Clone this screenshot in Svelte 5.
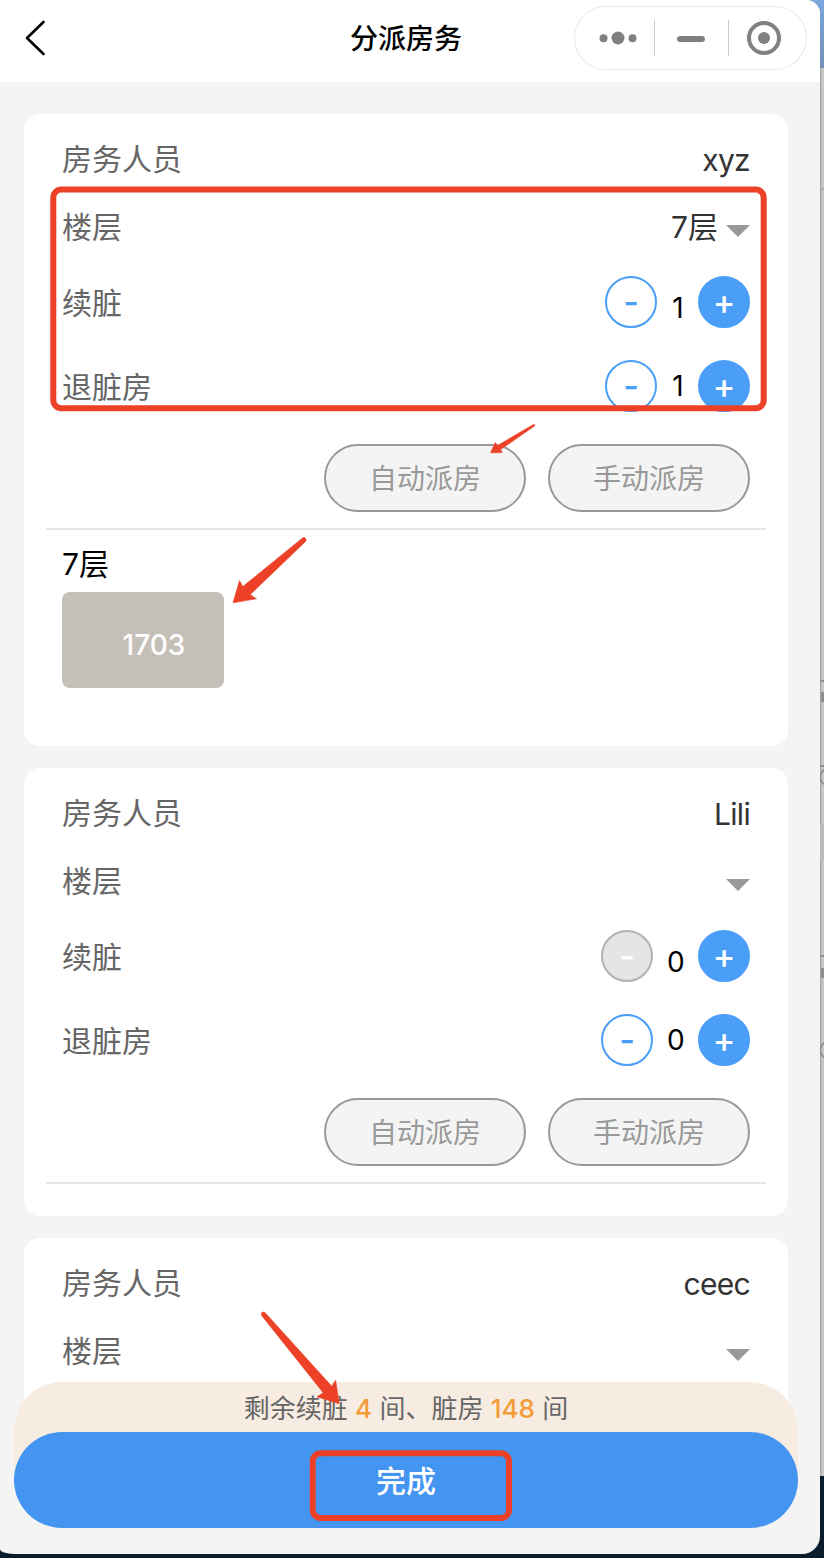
<script>
	let staff = [
		{
			id: 1,
			name: 'xyz',
			floor: '7层',
			stay: 1,
			checkout: 1,
			stayDisabled: false,
			open: true,
			rooms: [{floor: '7层', list: ['1703']}]
		},
		{id: 2, name: 'Lili', floor: '', stay: 0, checkout: 0, stayDisabled: true, open: true, rooms: []},
		{id: 3, name: 'ceec', floor: '', stay: 0, checkout: 0, stayDisabled: true, open: false, rooms: []}
	];

	let stayLeft = 4;
	let dirtyLeft = 148;

	function change(item, key, step) {
		item[key] = Math.max(0, item[key] + step);
		staff = staff;
	}
</script>

<div class="desktop">
	<div class="behind">
		<div class="behind_sky"></div>
		<div class="behind_window">
			<i class="line l1"></i>
			<i class="line l2"></i>
			<i class="line l3"></i>
			<i class="line l4"></i>
			<i class="ring r1"></i>
			<i class="band"></i>
			<i class="line l5"></i>
			<i class="line l6"></i>
			<i class="ring r2"></i>
		</div>
	</div>

	<div class="phone">
		<header>
			<button class="back" aria-label="返回">
				<svg width="24" height="40" viewBox="0 0 24 40">
					<path d="M19.5 4 L3 20 L19.5 36" fill="none" stroke="#000" stroke-width="2.6" stroke-linecap="round" stroke-linejoin="round" />
				</svg>
			</button>
			<h1>分派房务</h1>
			<div class="capsule">
				<svg width="233" height="64" viewBox="0 0 233 64">
					<g fill="#808080">
						<circle cx="29.5" cy="32.3" r="4" />
						<circle cx="44" cy="32" r="6.5" />
						<circle cx="58.5" cy="32.3" r="4" />
						<rect x="103" y="30" width="28" height="6" rx="3" />
						<circle cx="190" cy="32" r="6" />
					</g>
					<circle cx="190" cy="32" r="15" fill="none" stroke="#808080" stroke-width="4" />
					<path d="M80.5 14 V50 M154.5 14 V50" stroke="#ccc" />
				</svg>
			</div>
		</header>

		<main>
			{#each staff as item (item.id)}
				<section class="card">
					<div class="row">
						<span class="label">房务人员</span>
						<span class="value name">{item.name}</span>
					</div>
					<div class="row">
						<span class="label">楼层</span>
						<span class="value picker"><span class="floor">{item.floor}</span><i class="arrow"></i></span>
					</div>
					{#if item.open}
						<div class="row tall">
							<span class="label">续脏</span>
							<div class="stepper">
								<button class="minus" class:disabled={item.stayDisabled} on:click={() => change(item, 'stay', -1)}>-</button>
								<span class="num low">{item.stay}</span>
								<button class="plus" on:click={() => change(item, 'stay', 1)}>+</button>
							</div>
						</div>
						<div class="row tall">
							<span class="label">退脏房</span>
							<div class="stepper">
								<button class="minus" on:click={() => change(item, 'checkout', -1)}>-</button>
								<span class="num">{item.checkout}</span>
								<button class="plus" on:click={() => change(item, 'checkout', 1)}>+</button>
							</div>
						</div>
						<div class="actions">
							<button>自动派房</button>
							<button>手动派房</button>
						</div>
					{/if}
					{#each item.rooms as group}
						<div class="rooms">
							<h3>{group.floor}</h3>
							<div class="rooms_list">
								{#each group.list as room}
									<div class="room">{room}</div>
								{/each}
							</div>
						</div>
					{/each}
				</section>
			{/each}
		</main>

		<footer>
			<p>剩余续脏 <b>{stayLeft}</b> 间、脏房 <b>{dirtyLeft}</b> 间</p>
			<button>完成</button>
		</footer>
	</div>

	<!-- markup over the page: frames and arrows -->
	<svg class="marks" width="824" height="1558" viewBox="0 0 824 1558">
		<g fill="none" stroke="#ec4126" stroke-width="6">
			<rect x="53.3" y="189.6" width="710.4" height="218.6" rx="8" />
			<rect x="312.7" y="1453.3" width="196.3" height="64.7" rx="8" />
		</g>
		<g fill="#ec4126" stroke="#ec4126" stroke-width="0.6" stroke-linejoin="round">
			<path d="M490.5 452.8 L495.3 442.4 L497.5 445.5 L533.4 424.5 Q535.2 424.4 534.8 425.8 L500.6 449.6 L502.2 452.6 Z" />
			<path d="M233 602.8 L239.5 580.6 L242.8 586.6 L302.8 537.8 Q305.5 537 306.2 539.6 Q306.2 541 305 542 L250.2 594.6 L256.4 598.8 Z" />
			<path d="M339.2 1403.8 L335.6 1380.2 L331.8 1386.3 L265.4 1313 Q263.5 1311 261.6 1312.8 Q260.8 1314.2 262 1316 L323.2 1392.8 L317 1396.8 Z" />
		</g>
	</svg>
</div>

<style>
	:global(body) {
		margin: 0;
		background: #0b1c2c;
	}

	.desktop {
		position: relative;
		width: 824px;
		height: 1558px;
		overflow: hidden;
		background: #0b1c2c;
		font-family: Inter, "Noto Sans CJK SC", sans-serif;
	}

	button {
		margin: 0;
		padding: 0;
		border: none;
		background: none;
		font-family: inherit;
		box-sizing: border-box;
		cursor: pointer;
	}

	.behind {
		position: absolute;
		top: 0;
		right: 0;
		width: 24px;
	}

	.behind_sky {
		height: 68px;
		background: linear-gradient(#78a7dc, #7390b5);
	}

	.behind_window {
		position: relative;
		height: 1408px;
		overflow: hidden;
		background: linear-gradient(90deg, #999 20px, #b4b4b4 21px, #c6c6c6 22px, #cacaca);
	}

	.line,
	.band {
		position: absolute;
		right: 0;
		width: 4px;
		height: 2px;
		background: #8e8e8e;
	}

	.l1 { top: 120px; background: #aaa; }
	.l2 { top: 612px; }
	.l3 { top: 624px; width: 3px; height: 10px; }
	.l4 { top: 697px; }
	.l5 { top: 887px; }
	.l6 { top: 900px; width: 3px; height: 10px; }

	.band {
		top: 756px;
		height: 36px;
		background: #bbb;
	}

	.ring {
		position: absolute;
		right: -13px;
		width: 14px;
		height: 14px;
		border: 2px solid #8e8e8e;
		border-radius: 50%;
	}

	.r1 { top: 700px; }
	.r2 { top: 973px; }

	.phone {
		position: relative;
		width: 820px;
		height: 1554px;
		overflow: hidden;
		border-radius: 0 14px 18px 14px / 0 14px 18px 5px;
		background: #f4f4f4;
	}

	header {
		display: grid;
		grid-template-columns: 238px 336px 233px;
		align-items: center;
		height: 82px;
		background: #fff;
	}

	.back {
		width: 48px;
		height: 40px;
		margin: -6px 0 0 24px;
		text-align: left;
	}

	.back svg,
	.capsule svg {
		display: block;
	}

	h1 {
		margin: -4px 0 0;
		font-size: 28px;
		font-weight: 500;
		line-height: 40px;
		text-align: center;
		color: #000;
	}

	.capsule {
		height: 64px;
		margin-top: -6px;
		border-radius: 32px;
		box-shadow: inset 0 0 0 1px #e8e8e8;
	}

	main {
		display: flex;
		flex-direction: column;
		gap: 22px;
		padding: 32px 32px 0 24px;
	}

	.card {
		padding: 11px 22px 32px;
		border-radius: 16px;
		background: #fff;
	}

	.row {
		display: flex;
		align-items: center;
		justify-content: space-between;
		height: 68px;
		padding: 0 16px;
		font-size: 30px;
	}

	.tall {
		height: 84px;
	}

	.row:nth-child(3) {
		margin-top: -1px;
	}

	.label {
		padding-bottom: 4px;
		color: #666;
	}

	.tall .label {
		padding-bottom: 3px;
	}

	.value {
		color: #333;
	}

	.name {
		padding-top: 1px;
		letter-spacing: -0.7px;
	}

	.picker {
		display: flex;
		align-items: center;
		gap: 8px;
	}

	.floor {
		padding-bottom: 4px;
	}

	.arrow {
		margin-top: 8px;
		border: 12px solid transparent;
		border-top-color: #999;
		border-bottom: none;
	}

	.stepper {
		display: flex;
		align-items: center;
	}

	.stepper button {
		width: 52px;
		height: 52px;
		border: 2px solid #4a9ef8;
		border-radius: 50%;
		font-size: 34px;
		font-weight: 500;
		line-height: 46px;
		text-align: center;
		color: #4a9ef8;
	}

	.stepper .plus {
		background: #4a9ef8;
		color: #fff;
	}

	.stepper .disabled {
		border-color: #b2b2b2;
		background: #e5e5e5;
		color: #fff;
	}

	.num {
		min-width: 13px;
		padding: 0 14px;
		font-size: 28px;
		letter-spacing: -0.7px;
		text-align: center;
		color: #000;
	}

	.low {
		margin-top: 12px;
	}

	.actions {
		display: flex;
		justify-content: flex-end;
		gap: 22px;
		padding: 16px;
		border-bottom: 2px solid #e5e5e5;
	}

	.actions button {
		width: 202px;
		height: 68px;
		padding-bottom: 2px;
		border: 2px solid #999;
		border-radius: 34px;
		background: #f4f4f4;
		font-size: 28px;
		color: #999;
	}

	.rooms {
		padding: 14px 16px 26px;
	}

	h3 {
		margin: 0 0 8px;
		font-size: 30px;
		font-weight: 400;
		line-height: 40px;
		color: #000;
	}

	.rooms_list {
		display: flex;
		flex-wrap: wrap;
		gap: 16px;
	}

	.room {
		width: 162px;
		height: 96px;
		padding: 10px 0 0 22px;
		border-radius: 8px;
		box-sizing: border-box;
		background: #c4c0b8;
		font-size: 28px;
		font-weight: 500;
		line-height: 87px;
		text-align: center;
		color: #fff;
	}

	footer {
		position: absolute;
		left: 0;
		bottom: 26px;
		width: 784px;
		margin-left: 14px;
		border-radius: 48px;
		background: #f7ece2;
	}

	footer p {
		height: 50px;
		margin: 0;
		font-size: 26px;
		line-height: 53px;
		text-align: center;
		color: #666;
	}

	footer b {
		font-weight: 500;
		color: #f39c38;
	}

	footer button {
		display: block;
		width: 100%;
		height: 96px;
		padding-bottom: 3px;
		border-radius: 48px;
		background: #4395f1;
		font-size: 30px;
		font-weight: 500;
		color: #fff;
	}

	.marks {
		position: absolute;
		top: 0;
		left: 0;
		pointer-events: none;
	}
</style>
